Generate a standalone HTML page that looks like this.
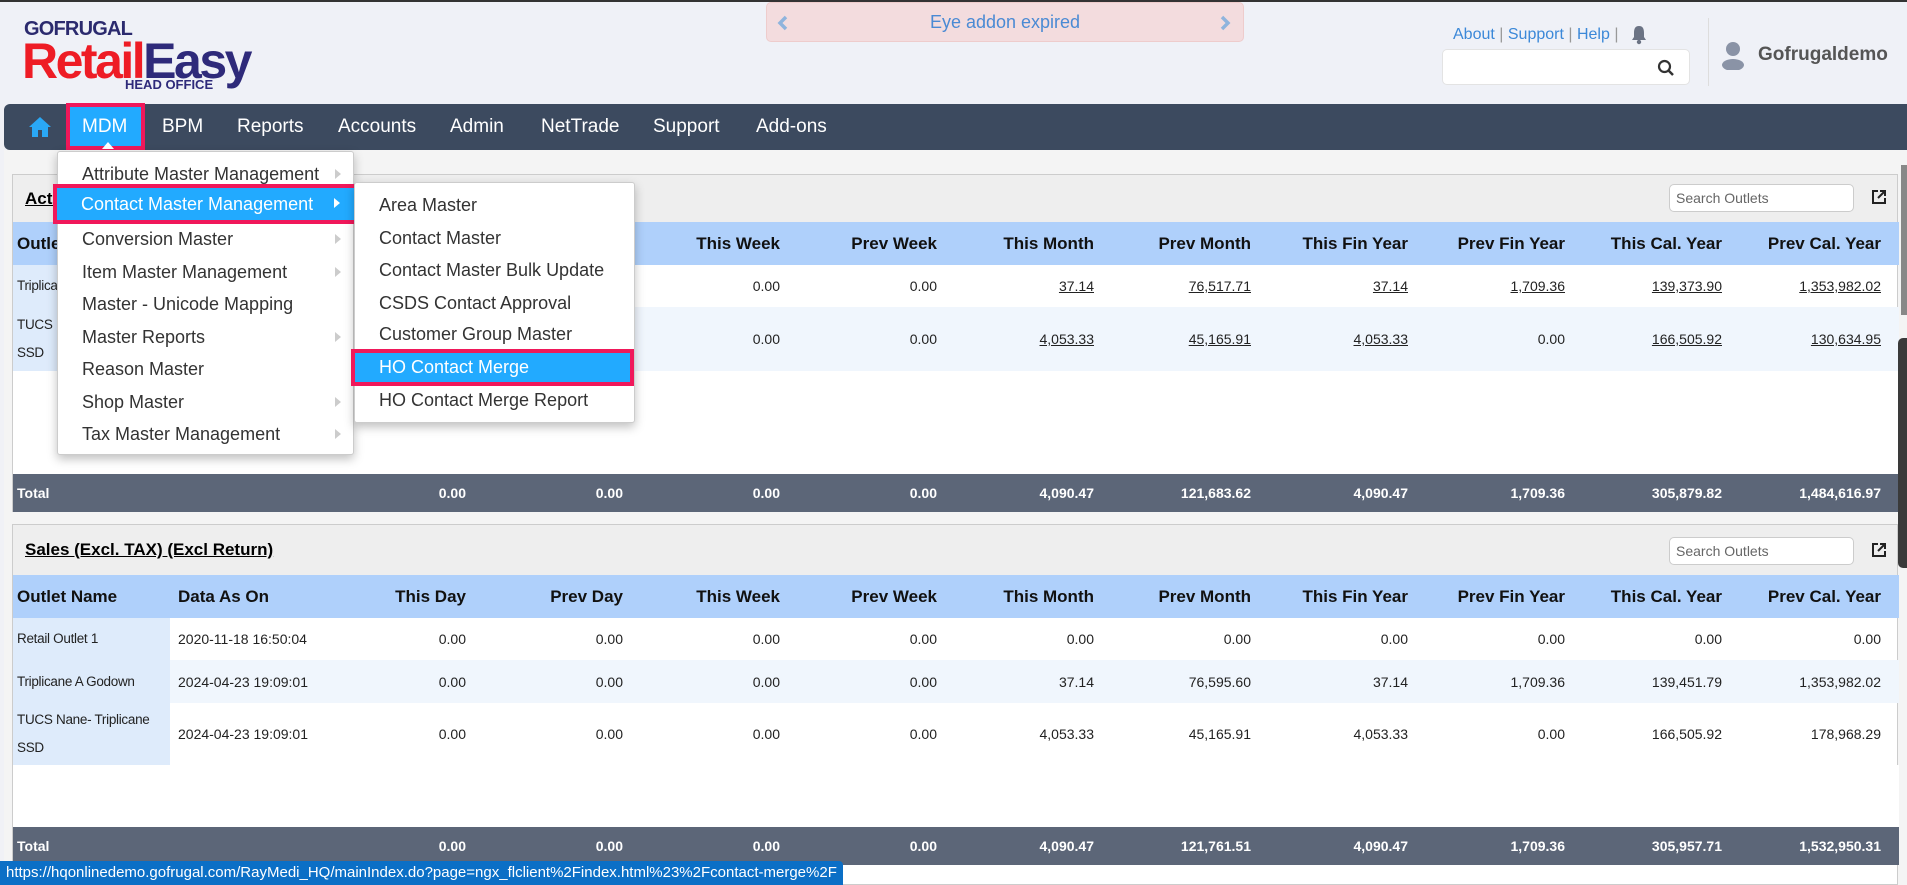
<!DOCTYPE html>
<html><head><meta charset="utf-8"><style>
*{box-sizing:border-box;margin:0;padding:0}
body{width:1907px;height:885px;overflow:hidden;background:#f0f1f6;font-family:"Liberation Sans",sans-serif;position:relative}
.abs{position:absolute}
#top{left:0;top:0;width:1907px;height:104px;background:#eff1f7;border-top:2px solid #333}
#nav{left:4px;top:104px;width:1903px;height:46px;background:#3c4a5f;border-radius:6px 0 0 6px}
.ni{position:absolute;top:0;height:46px;line-height:46px;color:#fff;font-size:19px}
#page{left:4px;top:150px;width:1903px;height:735px;background:#f4f4f4}
.panel{position:absolute;left:12px;width:1886px;background:#fff;border:1px solid #ccc}
.ptitle{position:absolute;left:0;top:0;width:100%;background:#eee;font-weight:bold;font-size:17px}
table{border-collapse:collapse;position:absolute;left:0;table-layout:fixed;font-size:14px;color:#222}
td,th{padding:0 8px;white-space:nowrap;overflow:hidden}
th{font-size:17px;text-align:right;background:#afd0fb;color:#111}
td{text-align:right}
th.l,td.l{text-align:left}
th.l.f{padding-left:4px}
td.c1{background:#deebfb;white-space:normal;line-height:28px;padding-left:4px;padding-right:2px;font-size:13.5px;letter-spacing:-0.3px}
tr.s td{background:#f0f6fd}
tr.s td.c1{background:#deebfb}
tr.t td{background:#5c6678;color:#fff;font-weight:bold}
tr.t td.l{padding-left:4px}
u{text-decoration:underline}
.sbox{position:absolute;width:185px;height:28px;background:#fff;border:1px solid #ccc;border-radius:5px;font-size:14px;color:#666;padding:5px 6px}
.menu{position:absolute;background:#fff;border:1px solid #ccc;border-radius:3px;box-shadow:0 4px 10px rgba(0,0,0,.25);font-size:18px;color:#333}
.mi{position:absolute;left:0;width:100%;height:32px;line-height:32px;padding-left:24px}
.arr{position:absolute;right:12px;top:11px;width:0;height:0;border-left:6px solid #ccc;border-top:5px solid transparent;border-bottom:5px solid transparent}
</style></head><body>
<div id="top" class="abs">
 <div class="abs" style="left:24px;top:16px;font-size:20px;font-weight:bold;color:#2b2a6e;letter-spacing:-0.8px">GOFRUGAL</div>
 <div class="abs" style="left:22px;top:33px;font-size:50px;font-weight:bold;letter-spacing:-2.5px;line-height:52px"><span style="color:#ee1c25">Retail</span><span style="color:#2e2a7a">Easy</span></div>
 <div class="abs" style="left:125px;top:75px;font-size:13px;font-weight:bold;color:#2e2a7a">HEAD OFFICE</div>
 <div class="abs" style="left:766px;top:0px;width:478px;height:40px;background:#f3dcde;border:1px solid #ecc;border-radius:5px;text-align:center;line-height:38px;color:#4a8ad4;font-size:18px">Eye addon expired
  <svg class="abs" style="left:10px;top:12px" width="12" height="16" viewBox="0 0 12 16"><path d="M9 2 L3 8 L9 14" fill="none" stroke="#8fb4dd" stroke-width="3.5"/></svg>
  <svg class="abs" style="right:12px;top:12px" width="12" height="16" viewBox="0 0 12 16"><path d="M3 2 L9 8 L3 14" fill="none" stroke="#8fb4dd" stroke-width="3.5"/></svg></div>
 <div class="abs" style="left:1453px;top:24px;font-size:16px;color:#3b88d8">About <span style="color:#999">|</span> Support <span style="color:#999">|</span> Help <span style="color:#999">|</span></div>
 <svg class="abs" style="left:1630px;top:23px" width="18" height="20" viewBox="0 0 18 20"><path d="M9 1 C5 1 4 4 4 8 V12 L2 15 H16 L14 12 V8 C14 4 13 1 9 1 Z" fill="#6b7384"/><circle cx="9" cy="17" r="2.2" fill="#6b7384"/></svg>
 <div class="abs" style="left:1442px;top:47px;width:248px;height:36px;background:#fff;border:1px solid #e3e3e3;border-radius:5px">
  <svg class="abs" style="right:14px;top:9px" width="18" height="18" viewBox="0 0 18 18"><circle cx="7.5" cy="7.5" r="5.5" fill="none" stroke="#333" stroke-width="2.2"/><line x1="11.5" y1="11.5" x2="16" y2="16" stroke="#333" stroke-width="2.5"/></svg></div>
 <div class="abs" style="left:1708px;top:16px;width:1px;height:68px;background:#ddd"></div>
 <svg class="abs" style="left:1720px;top:38px" width="26" height="30" viewBox="0 0 26 30"><circle cx="13" cy="9" r="7" fill="#8a93a6"/><ellipse cx="13" cy="25" rx="11" ry="6" fill="#8a93a6"/></svg>
 <div class="abs" style="left:1758px;top:42px;font-size:19px;font-weight:bold;color:#555">Gofrugaldemo</div>
</div>
<div id="nav" class="abs">
 <svg class="abs" style="left:24px;top:12px" width="24" height="22" viewBox="0 0 24 22"><path d="M12 1 L1 11 H4 V21 H10 V14 H14 V21 H20 V11 H23 Z" fill="#2aa8f5"/></svg>
 <div class="abs" style="left:62px;top:-1px;width:79px;height:47px;border:4px solid #f0185a;background:#22aaff"></div>
 <div class="abs" style="left:98px;top:38px;width:0;height:0;border-left:6px solid transparent;border-right:6px solid transparent;border-bottom:7px solid #fff"></div>
 <div class="ni" style="left:78px">MDM</div>
 <div class="ni" style="left:158px">BPM</div>
 <div class="ni" style="left:233px">Reports</div>
 <div class="ni" style="left:334px">Accounts</div>
 <div class="ni" style="left:446px">Admin</div>
 <div class="ni" style="left:537px">NetTrade</div>
 <div class="ni" style="left:649px">Support</div>
 <div class="ni" style="left:752px">Add-ons</div>
</div>
<div id="page" class="abs"></div>

<div class="panel" style="top:174px;height:338px">
 <div class="ptitle" style="height:47px;line-height:47px;padding-left:12px"><u>Active Outlets</u></div>
 <div class="sbox" style="left:1656px;top:9px">Search Outlets</div>
 <svg class="abs" style="left:1858px;top:14px" width="16" height="16" viewBox="0 0 16 16"><path d="M7 2H2V14H14V9" fill="none" stroke="#222" stroke-width="2"/><path d="M9 2H14V7M14 2L7 9" fill="none" stroke="#222" stroke-width="2"/></svg>
 <table style="top:47px;width:1886px">
  <colgroup><col style="width:157px"><col style="width:147px"><col span="9" style="width:157px"><col style="width:169px"></colgroup>
  <tr style="height:43px"><th class="l f">Outlet Name</th><th class="l">Data As On</th><th>This Day</th><th>Prev Day</th><th>This Week</th><th>Prev Week</th><th>This Month</th><th>Prev Month</th><th>This Fin Year</th><th>Prev Fin Year</th><th>This Cal. Year</th><th style="padding-right:18px">Prev Cal. Year</th></tr>
  <tr style="height:42px"><td class="l c1">Triplicane A Godown</td><td class="l">2024-04-23 19:09:01</td><td>0.00</td><td>0.00</td><td>0.00</td><td>0.00</td><td><u>37.14</u></td><td><u>76,517.71</u></td><td><u>37.14</u></td><td><u>1,709.36</u></td><td><u>139,373.90</u></td><td style="padding-right:18px"><u>1,353,982.02</u></td></tr>
  <tr class="s" style="height:64px"><td class="l c1">TUCS Nane- Triplicane SSD</td><td class="l">2024-04-23 19:09:01</td><td>0.00</td><td>0.00</td><td>0.00</td><td>0.00</td><td><u>4,053.33</u></td><td><u>45,165.91</u></td><td><u>4,053.33</u></td><td>0.00</td><td><u>166,505.92</u></td><td style="padding-right:18px"><u>130,634.95</u></td></tr>
  <tr style="height:103px"><td colspan="12" style="background:#fff"></td></tr>
  <tr class="t" style="height:38px"><td class="l">Total</td><td></td><td>0.00</td><td>0.00</td><td>0.00</td><td>0.00</td><td>4,090.47</td><td>121,683.62</td><td>4,090.47</td><td>1,709.36</td><td>305,879.82</td><td style="padding-right:18px">1,484,616.97</td></tr>
 </table>
</div>

<div class="panel" style="top:524px;height:361px">
 <div class="ptitle" style="height:50px;line-height:50px;padding-left:12px"><u>Sales (Excl. TAX) (Excl Return)</u></div>
 <div class="sbox" style="left:1656px;top:12px">Search Outlets</div>
 <svg class="abs" style="left:1858px;top:17px" width="16" height="16" viewBox="0 0 16 16"><path d="M7 2H2V14H14V9" fill="none" stroke="#222" stroke-width="2"/><path d="M9 2H14V7M14 2L7 9" fill="none" stroke="#222" stroke-width="2"/></svg>
 <table style="top:50px;width:1886px">
  <colgroup><col style="width:157px"><col style="width:147px"><col span="9" style="width:157px"><col style="width:169px"></colgroup>
  <tr style="height:43px"><th class="l f">Outlet Name</th><th class="l">Data As On</th><th>This Day</th><th>Prev Day</th><th>This Week</th><th>Prev Week</th><th>This Month</th><th>Prev Month</th><th>This Fin Year</th><th>Prev Fin Year</th><th>This Cal. Year</th><th style="padding-right:18px">Prev Cal. Year</th></tr>
  <tr style="height:42px"><td class="l c1">Retail Outlet 1</td><td class="l">2020-11-18 16:50:04</td><td>0.00</td><td>0.00</td><td>0.00</td><td>0.00</td><td>0.00</td><td>0.00</td><td>0.00</td><td>0.00</td><td>0.00</td><td style="padding-right:18px">0.00</td></tr>
  <tr class="s" style="height:43px"><td class="l c1">Triplicane A Godown</td><td class="l">2024-04-23 19:09:01</td><td>0.00</td><td>0.00</td><td>0.00</td><td>0.00</td><td>37.14</td><td>76,595.60</td><td>37.14</td><td>1,709.36</td><td>139,451.79</td><td style="padding-right:18px">1,353,982.02</td></tr>
  <tr style="height:62px"><td class="l c1">TUCS Nane- Triplicane SSD</td><td class="l">2024-04-23 19:09:01</td><td>0.00</td><td>0.00</td><td>0.00</td><td>0.00</td><td>4,053.33</td><td>45,165.91</td><td>4,053.33</td><td>0.00</td><td>166,505.92</td><td style="padding-right:18px">178,968.29</td></tr>
  <tr style="height:62px"><td colspan="12" style="background:#fff"></td></tr>
  <tr class="t" style="height:38px"><td class="l">Total</td><td></td><td>0.00</td><td>0.00</td><td>0.00</td><td>0.00</td><td>4,090.47</td><td>121,761.51</td><td>4,090.47</td><td>1,709.36</td><td>305,957.71</td><td style="padding-right:18px">1,532,950.31</td></tr>
 </table>
</div>

<div class="abs" style="left:1901px;top:165px;width:6px;height:150px;background:#888"></div>
<div class="abs" style="left:1898px;top:338px;width:9px;height:230px;background:#3a3a3a;border-radius:5px 0 0 5px"></div>

<div class="menu" style="left:57px;top:151px;width:297px;height:304px">
 <div class="mi" style="top:6px">Attribute Master Management<span class="arr"></span></div>
 <div class="mi" style="top:71px">Conversion Master<span class="arr"></span></div>
 <div class="mi" style="top:104px">Item Master Management<span class="arr"></span></div>
 <div class="mi" style="top:136px">Master - Unicode Mapping</div>
 <div class="mi" style="top:169px">Master Reports<span class="arr"></span></div>
 <div class="mi" style="top:201px">Reason Master</div>
 <div class="mi" style="top:234px">Shop Master<span class="arr"></span></div>
 <div class="mi" style="top:266px">Tax Master Management<span class="arr"></span></div>
</div>
<div class="abs" style="left:53px;top:184px;width:305px;height:40px;border:4px solid #f0185a;background:#22aaff;color:#fff;font-size:18px;line-height:32px;padding-left:24px">Contact Master Management<span class="arr" style="border-left-color:#fff;right:14px;top:10px"></span></div>
<div class="menu" style="left:354px;top:182px;width:281px;height:241px">
 <div class="mi" style="top:6px">Area Master</div>
 <div class="mi" style="top:39px">Contact Master</div>
 <div class="mi" style="top:71px">Contact Master Bulk Update</div>
 <div class="mi" style="top:104px">CSDS Contact Approval</div>
 <div class="mi" style="top:135px">Customer Group Master</div>
 <div class="mi" style="top:201px">HO Contact Merge Report</div>
</div>
<div class="abs" style="left:351px;top:349px;width:283px;height:37px;border:4px solid #f0185a;background:#22aaff;color:#fff;font-size:18px;line-height:29px;padding-left:24px">HO Contact Merge</div>

<div class="abs" style="left:0;top:861px;width:843px;height:24px;background:#0b6fc6;color:#fff;font-size:15px;line-height:24px;padding-left:6px;border-radius:0 4px 0 0">https://hqonlinedemo.gofrugal.com/RayMedi_HQ/mainIndex.do?page=ngx_flclient%2Findex.html%23%2Fcontact-merge%2F</div>
</body></html>
